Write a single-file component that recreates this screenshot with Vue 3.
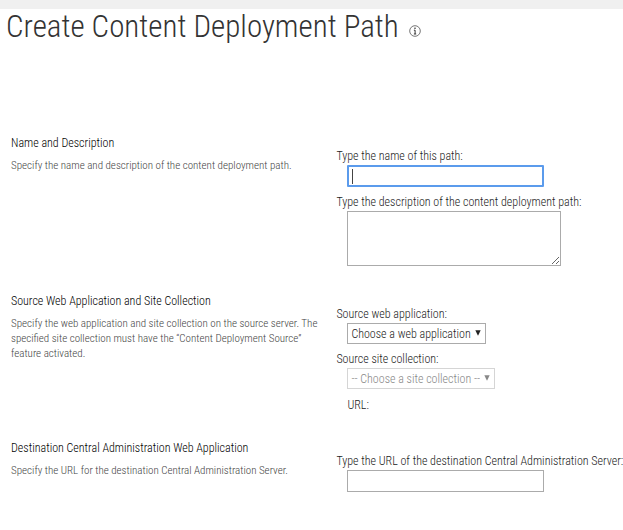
<script setup>
import { ref, onMounted } from 'vue'

const nameInput = ref(null)
const pathName = ref('')
const description = ref('')
const webApp = ref('')
const siteCollection = ref('')
const destinationUrl = ref('')

onMounted(() => nameInput.value.focus())
</script>

<template>
  <div class="page">
    <div class="ribbon"></div>
    <header class="header">
      <h1 class="title">Create Content Deployment Path</h1>
      <button class="info" type="button" aria-label="Page information">
        <svg viewBox="0 0 12 12" width="12" height="12" aria-hidden="true">
          <circle cx="6" cy="6" r="5.3" fill="none" stroke="#666" stroke-width="0.9" />
          <rect x="5.3" y="2.6" width="1.4" height="1.3" fill="#333" />
          <path d="M4.9 5.2H6.1V9M4.9 9H7.2" fill="none" stroke="#333" stroke-width="1" />
        </svg>
      </button>
    </header>

    <form class="form" @submit.prevent>
      <section class="row">
        <div class="about">
          <h2>Name and Description</h2>
          <p>Specify the name and description of the content deployment path.</p>
        </div>
        <div class="fields">
          <div class="field">
            <label for="path-name">Type the name of this path:</label>
            <div class="control" :class="{ empty: !pathName }">
              <input id="path-name" ref="nameInput" v-model="pathName" type="text" />
            </div>
          </div>
          <div class="field">
            <label for="path-desc">Type the description of the content deployment path:</label>
            <div class="control area">
              <textarea id="path-desc" v-model="description"></textarea>
            </div>
          </div>
        </div>
      </section>

      <section class="row">
        <div class="about">
          <h2>Source Web Application and Site Collection</h2>
          <p>
            Specify the web application and site collection on the source server. The
            specified site collection must have the “Content Deployment Source”
            feature activated.
          </p>
        </div>
        <div class="fields">
          <div class="field">
            <label for="web-app">Source web application:</label>
            <div class="control pick">
              <select id="web-app" v-model="webApp">
                <option value="">Choose a web application</option>
              </select>
              <svg class="arrow" viewBox="0 0 6 6" width="6" height="6" aria-hidden="true">
                <path d="M0.3 0.3H5.7L3 5.8Z" fill="#222" />
              </svg>
            </div>
          </div>
          <div class="field">
            <label for="site-coll">Source site collection:</label>
            <div class="control pick">
              <select id="site-coll" v-model="siteCollection" disabled>
                <option value="">-- Choose a site collection --</option>
              </select>
              <svg class="arrow" viewBox="0 0 6 6" width="6" height="6" aria-hidden="true">
                <path d="M0.3 0.3H5.7L3 5.8Z" fill="#888" />
              </svg>
            </div>
          </div>
          <div class="url">URL:</div>
        </div>
      </section>

      <section class="row">
        <div class="about">
          <h2>Destination Central Administration Web Application</h2>
          <p>Specify the URL for the destination Central Administration Server.</p>
        </div>
        <div class="fields">
          <div class="field">
            <label for="dest-url">Type the URL of the destination Central Administration Server:</label>
            <div class="control">
              <input id="dest-url" v-model="destinationUrl" type="text" />
            </div>
          </div>
        </div>
      </section>
    </form>
  </div>
</template>

<style>
body {
  background: #fff;
}
</style>

<style scoped>
.page {
  font-family: "Roboto Condensed", Roboto, sans-serif;
  font-size: 12px;
  line-height: 18px;
  font-weight: 300;
  color: #222;
}
.ribbon {
  height: 9px;
  background: #f0f0f0;
}
.header {
  display: flex;
  align-items: center;
  gap: 10px;
  padding: 0 6px;
}
.title {
  margin: 0;
  font-size: 31px;
  line-height: 36px;
  font-weight: 300;
  color: #333;
  white-space: nowrap;
}
.info {
  display: flex;
  margin-top: 8px;
  padding: 0;
  border: 0;
  background: none;
}
.form {
  padding-top: 89px;
}
.row {
  display: grid;
  grid-template-columns: 54% 1fr;
  padding-bottom: 26px;
}
.about {
  padding: 0 8px 0 11px;
}
h2 {
  margin: 0 0 5px;
  font-size: 12px;
  line-height: 19px;
  font-weight: 300;
  color: #000;
}
p {
  margin: 0;
  font-size: 11px;
  line-height: 15px;
  color: #444;
}
.fields {
  display: flex;
  flex-direction: column;
  gap: 6px;
  padding-top: 13px;
}
.field label {
  display: block;
  white-space: nowrap;
}
.control {
  position: relative;
  display: flex;
  width: 208px;
  max-width: 100%;
  box-sizing: border-box;
  padding-left: 11px;
}
.area {
  width: 225px;
}
.pick {
  width: max-content;
}
input,
textarea,
select {
  box-sizing: border-box;
  width: 100%;
  height: 22px;
  margin: 0;
  padding: 0 4px;
  border: 1px solid #ababab;
  border-radius: 0;
  background: #fff;
  font: inherit;
  color: #222;
  outline: none;
}
input:focus {
  border: 2px solid #5b9bec;
  border-radius: 1px;
  caret-color: transparent;
}
.empty:focus-within::before {
  content: "";
  position: absolute;
  left: 16px;
  top: 4px;
  width: 1px;
  height: 15px;
  background: #444;
}
textarea {
  height: 55px;
  resize: both;
}
select {
  height: 21px;
  padding: 0 14px 0 3px;
  appearance: none;
}
select:disabled {
  border-color: #d5d5d5;
  color: #888;
  opacity: 1;
}
.arrow {
  position: absolute;
  right: 5px;
  top: 7px;
  pointer-events: none;
}
.url {
  padding: 2px 0 0 11px;
  line-height: 16px;
}
</style>
